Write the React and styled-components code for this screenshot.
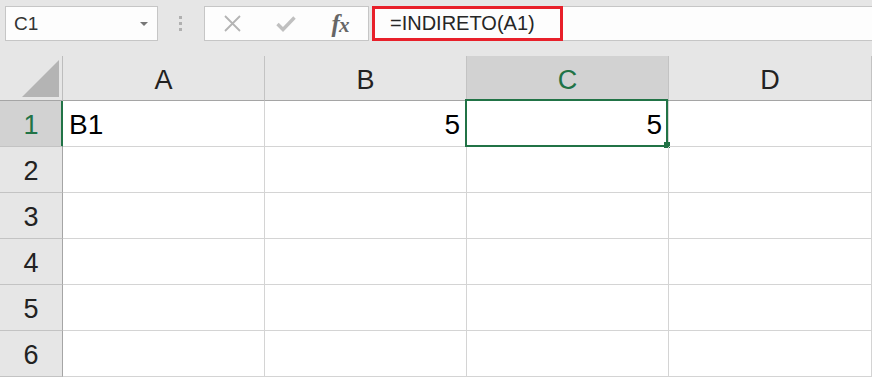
import React from 'react';
import styled, { createGlobalStyle } from 'styled-components';

const GREEN = '#217346';

const GlobalStyle = createGlobalStyle`
  html, body {
    margin: 0;
    padding: 0;
    background: #e6e6e6;
    font-family: "Liberation Sans", Arial, sans-serif;
    overflow: hidden;
  }
`;

const columns = ['A', 'B', 'C', 'D'];
const rows = [1, 2, 3, 4, 5, 6];
const data = {
  A1: { value: 'B1', align: 'left' },
  B1: { value: '5', align: 'right' },
  C1: { value: '5', align: 'right' },
};

const App = () => (
  <Page>
    <GlobalStyle />
    <Toolbar>
      <NameBox>
        <NameText>C1</NameText>
        <DropArrow />
      </NameBox>
      <Grip>
        <GripDot />
        <GripDot />
        <GripDot />
      </Grip>
      <FormulaButtons>
        <IconSlot>
          <svg width="17" height="17" viewBox="0 0 17 17">
            <path d="M1 1 L16 16 M16 1 L1 16" stroke="#b4b4b4" strokeWidth="1.8" fill="none" />
          </svg>
        </IconSlot>
        <IconSlot>
          <svg width="20" height="17" viewBox="0 0 20 17">
            <path d="M1.5 9 L7 14.5 L18.5 2.5" stroke="#c0c0c0" strokeWidth="3.4" fill="none" />
          </svg>
        </IconSlot>
        <IconSlot>
          <Fx>
            f<small>x</small>
          </Fx>
        </IconSlot>
      </FormulaButtons>
      <FormulaInput>
        <Highlight>=INDIRETO(A1)</Highlight>
      </FormulaInput>
    </Toolbar>

    <Sheet>
      <Corner>
        <CornerTriangle />
      </Corner>
      {columns.map((c) => (
        <ColHeader key={c} $selected={c === 'C'}>
          {c}
        </ColHeader>
      ))}
      {rows.map((r) => (
        <React.Fragment key={r}>
          <RowHeader $selected={r === 1}>{r}</RowHeader>
          {columns.map((c) => {
            const ref = c + r;
            const cell = data[ref];
            return (
              <Cell key={ref} $align={cell ? cell.align : 'left'}>
                {cell && cell.value}
                {ref === 'C1' && (
                  <Selection>
                    <FillHandle />
                  </Selection>
                )}
              </Cell>
            );
          })}
        </React.Fragment>
      ))}
    </Sheet>
  </Page>
);

export default App;

const Page = styled.div`
  width: 872px;
  height: 377px;
  background: #e6e6e6;
  overflow: hidden;
`;

const Toolbar = styled.div`
  height: 56px;
  box-sizing: border-box;
  padding-top: 6px;
  display: flex;
  align-items: flex-start;
`;

const NameBox = styled.div`
  box-sizing: border-box;
  margin-left: 5px;
  width: 153px;
  height: 35px;
  background: #fdfdfd;
  border: 1px solid #c6c6c6;
  display: flex;
  align-items: center;
  justify-content: space-between;
  padding: 0 9px 0 8px;
`;

const NameText = styled.span`
  font-size: 19px;
  color: #333;
  padding-top: 1px;
`;

const DropArrow = styled.span`
  width: 0;
  height: 0;
  border-left: 4px solid transparent;
  border-right: 4px solid transparent;
  border-top: 4px solid #777;
`;

const Grip = styled.div`
  margin-left: 21px;
  width: 3px;
  height: 35px;
  display: flex;
  flex-direction: column;
  justify-content: center;
  gap: 3px;
`;

const GripDot = styled.span`
  width: 3px;
  height: 3px;
  background: #b0b0b0;
`;

const FormulaButtons = styled.div`
  box-sizing: border-box;
  margin-left: 22px;
  width: 165px;
  height: 35px;
  background: #fdfdfd;
  border: 1px solid #c6c6c6;
  display: flex;
  align-items: center;
  padding-left: 13px;
  gap: 26px;
`;

const IconSlot = styled.span`
  width: 28px;
  display: flex;
  align-items: center;
  justify-content: center;
`;

const Fx = styled.span`
  font-family: "Liberation Serif", "Times New Roman", serif;
  font-style: italic;
  font-weight: bold;
  font-size: 25px;
  color: #666;
  letter-spacing: -1px;
  line-height: 1;

  small {
    font-size: 21px;
  }
`;

const FormulaInput = styled.div`
  box-sizing: border-box;
  margin-left: 3px;
  flex: 1;
  height: 35px;
  background: #fdfdfd;
  border-top: 1px solid #c6c6c6;
  border-bottom: 1px solid #c6c6c6;
  display: flex;
`;

const Highlight = styled.div`
  box-sizing: border-box;
  margin: -1px 0;
  width: 191px;
  height: 35px;
  border: 3px solid #e8202a;
  display: flex;
  align-items: center;
  padding-left: 15px;
  font-size: 20px;
  color: #262626;
`;

const Sheet = styled.div`
  display: grid;
  grid-template-columns: 63px 202px 202px 202px 203px;
  grid-template-rows: 45px repeat(6, 46px);
  background: #fff;
`;

const Corner = styled.div`
  box-sizing: border-box;
  background: #e6e6e6;
  border-right: 1px solid #bdbdbd;
  border-bottom: 1px solid #a5a5a5;
  display: flex;
  justify-content: flex-end;
  align-items: flex-end;
  padding: 0 3px 3px 0;
`;

const CornerTriangle = styled.div`
  width: 37px;
  height: 37px;
  background: #b4b4b4;
  clip-path: polygon(100% 0, 100% 100%, 0 100%);
`;

const ColHeader = styled.div`
  box-sizing: border-box;
  background: ${(p) => (p.$selected ? '#d2d2d2' : '#e6e6e6')};
  color: ${(p) => (p.$selected ? GREEN : '#222')};
  border-right: 1px solid #c3c3c3;
  border-bottom: 1px solid ${(p) => (p.$selected ? GREEN : '#a5a5a5')};
  box-shadow: ${(p) => (p.$selected ? `inset 0 -1px 0 ${GREEN}` : 'none')};
  font-size: 27px;
  display: flex;
  align-items: center;
  justify-content: center;
  padding-top: 4px;
`;

const RowHeader = styled.div`
  box-sizing: border-box;
  background: ${(p) => (p.$selected ? '#d2d2d2' : '#e6e6e6')};
  color: ${(p) => (p.$selected ? GREEN : '#222')};
  border-right: 1px solid ${(p) => (p.$selected ? GREEN : '#a5a5a5')};
  border-bottom: 1px solid #c3c3c3;
  box-shadow: ${(p) => (p.$selected ? `inset -1px 0 0 ${GREEN}` : 'none')};
  font-size: 27px;
  display: flex;
  align-items: center;
  justify-content: center;
  padding-top: 3px;
`;

const Cell = styled.div`
  position: relative;
  box-sizing: border-box;
  border-right: 1px solid #d4d4d4;
  border-bottom: 1px solid #d4d4d4;
  display: flex;
  align-items: center;
  justify-content: ${(p) => (p.$align === 'right' ? 'flex-end' : 'flex-start')};
  padding: 3px 6px 0 6px;
  font-size: 28px;
  color: #000;
`;

const Selection = styled.div`
  position: absolute;
  top: -2px;
  left: -2px;
  right: 0;
  bottom: -1px;
  border: 2px solid ${GREEN};
  pointer-events: none;
`;

const FillHandle = styled.div`
  position: absolute;
  right: -4px;
  bottom: -3px;
  width: 6px;
  height: 6px;
  background: ${GREEN};
`;
